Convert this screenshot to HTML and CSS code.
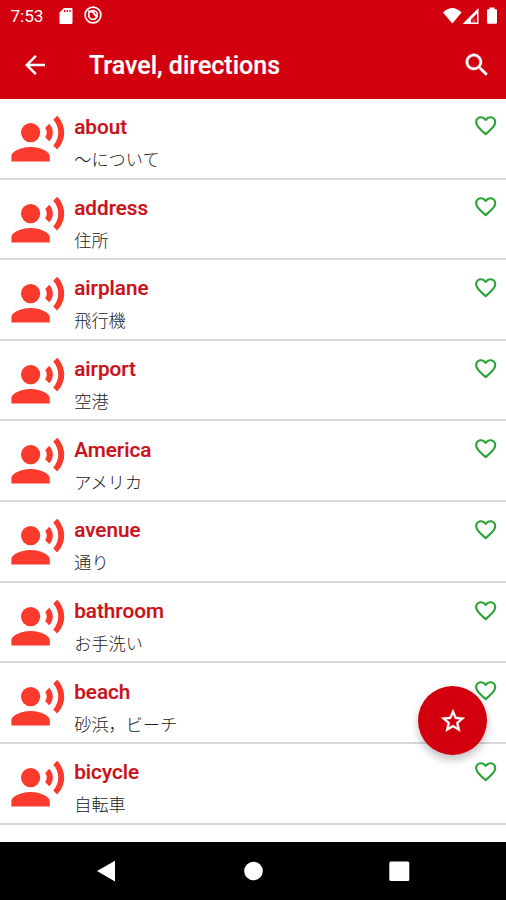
FILE: index.html
```html
<!DOCTYPE html>
<html lang="en">
<head>
<meta charset="utf-8">
<title>Travel, directions</title>
<link rel="stylesheet" href="styles.css">
</head>
<body>
<svg class="defs" aria-hidden="true">
  <symbol id="voice" viewBox="0 0 24 24"><circle cx="9" cy="9" r="4"/><path d="M9 15c-2.67 0-8 1.34-8 4v2h16v-2c0-2.66-5.33-4-8-4zm7.76-9.64l-1.68 1.69c.84 1.18.84 2.71 0 3.89l1.68 1.69c2.02-2.02 2.02-5.07 0-7.27zM20.07 2l-1.63 1.63c2.77 3.02 2.77 7.56 0 10.74L20.07 16c3.9-3.89 3.91-9.95 0-14z"/></symbol>
  <symbol id="heart" viewBox="0 0 24 24"><path d="M16.5 3c-1.74 0-3.41.81-4.5 2.09C10.91 3.81 9.24 3 7.5 3 4.42 3 2 5.42 2 8.5c0 3.78 3.4 6.86 8.55 11.54L12 21.35l1.45-1.32C18.6 15.36 22 12.28 22 8.5 22 5.42 19.58 3 16.5 3zm-4.4 15.55l-.1.1-.1-.1C7.14 14.24 4 11.39 4 8.5 4 6.5 5.5 5 7.5 5c1.54 0 3.04.99 3.57 2.36h1.87C13.46 5.99 14.96 5 16.5 5c2 0 3.5 1.5 3.5 3.5 0 2.89-3.14 5.74-7.9 10.05z"/></symbol>
</svg>
<div class="screen">
  <header class="top">
    <div class="status">
      <span class="clock">7:53</span>
      <svg class="sd" viewBox="0 0 14 16"><path fill-rule="evenodd" d="M5 0h7.300q1.200 0 1.200 1.200v13.600q0 1.200-1.200 1.200H1.700Q.5 16 .5 14.800V4.500zM5 2v2h1.300V2zm2.700 0v2h1.300V2zm2.700 0v2h1.300V2z"/></svg>
      <svg class="sync" viewBox="0 0 18 18"><g fill="none" stroke="#fff"><circle cx="9" cy="9" r="7.900" stroke-width="1.700"/><circle cx="9" cy="9" r="4.300" stroke-width="1.700"/><path d="M4 5.500h4.500L13 11.500" stroke-width="2"/></g></svg>
      <svg class="signals" viewBox="0 0 56 18"><path d="M0 5.500Q9.300-3.500 18.600 5.500L9.300 16.500z"/><path fill-rule="evenodd" d="M19.500 17L35.500 1v16zM28 15.500h6V6.500L28 12.500z"/><path d="M29.500 11.500h3v4h-3z" opacity=".25"/><path d="M46.500 .5h5v1.700h1.500q1 0 1 1v12.600q0 1-1 1h-8q-1 0-1-1V3.200q0-1 1-1h1.500z"/></svg>
    </div>
    <div class="bar">
      <svg class="back" viewBox="0 0 24 24"><path d="M20 11H7.830l5.590-5.590L12 4l-8 8 8 8 1.410-1.410L7.830 13H20z"/></svg>
      <h1>Travel, directions</h1>
      <svg class="search" viewBox="0 0 24 24"><path d="M15.500 14h-.790l-.280-.270C15.410 12.590 16 11.110 16 9.500 16 5.910 13.090 3 9.500 3S3 5.910 3 9.500 5.910 16 9.500 16c1.610 0 3.090-.590 4.230-1.570l.270.280v.790l5 4.990L20.490 19zm-6 0C7.010 14 5 11.990 5 9.500S7.010 5 9.500 5 14 7.010 14 9.500 11.990 14 9.500 14z"/></svg>
    </div>
  </header>
  <main class="list">
    <div class="row"><svg class="voice"><use href="#voice"/></svg><div class="words"><b>about</b><span lang="ja">〜について</span></div><svg class="heart"><use href="#heart"/></svg></div>
    <div class="row"><svg class="voice"><use href="#voice"/></svg><div class="words"><b>address</b><span lang="ja">住所</span></div><svg class="heart"><use href="#heart"/></svg></div>
    <div class="row"><svg class="voice"><use href="#voice"/></svg><div class="words"><b>airplane</b><span lang="ja">飛行機</span></div><svg class="heart"><use href="#heart"/></svg></div>
    <div class="row"><svg class="voice"><use href="#voice"/></svg><div class="words"><b>airport</b><span lang="ja">空港</span></div><svg class="heart"><use href="#heart"/></svg></div>
    <div class="row"><svg class="voice"><use href="#voice"/></svg><div class="words"><b>America</b><span lang="ja">アメリカ</span></div><svg class="heart"><use href="#heart"/></svg></div>
    <div class="row"><svg class="voice"><use href="#voice"/></svg><div class="words"><b>avenue</b><span lang="ja">通り</span></div><svg class="heart"><use href="#heart"/></svg></div>
    <div class="row"><svg class="voice"><use href="#voice"/></svg><div class="words"><b>bathroom</b><span lang="ja">お手洗い</span></div><svg class="heart"><use href="#heart"/></svg></div>
    <div class="row"><svg class="voice"><use href="#voice"/></svg><div class="words"><b>beach</b><span lang="ja">砂浜，ビーチ</span></div><svg class="heart"><use href="#heart"/></svg></div>
    <div class="row"><svg class="voice"><use href="#voice"/></svg><div class="words"><b>bicycle</b><span lang="ja">自転車</span></div><svg class="heart"><use href="#heart"/></svg></div>
  </main>
  <div class="fab"><svg viewBox="0 0 24 24"><path d="M22 9.240l-7.190-.620L12 2 9.190 8.630 2 9.240l5.460 4.730L5.820 21 12 17.270 18.180 21l-1.630-7.030zM12 15.400l-3.760 2.270 1-4.280-3.320-2.880 4.380-.380L12 6.100l1.710 4.040 4.380.380-3.320 2.880 1 4.280z"/></svg></div>
  <nav class="nav">
    <svg viewBox="0 0 506 58"><path d="M97 29L115 18.700V39.500z"/><circle cx="253.500" cy="29" r="9.300"/><rect x="389.300" y="19.500" width="20" height="19.500" rx="1.500"/></svg>
  </nav>
</div>
</body>
</html>
```
FILE: styles.css
```css
* { box-sizing: border-box; }
body { margin: 0; background: #fff; font-family: Roboto, "Noto Sans CJK JP", sans-serif; }
svg { display: block; flex: none; fill: currentColor; }
.defs { position: absolute; width: 0; height: 0; }
.screen { position: relative; width: 506px; height: 900px; display: flex; flex-direction: column; overflow: hidden; }

.top { height: 98.5px; flex: none; background: #d2000f; color: #fff; }
.status { height: 32px; display: flex; align-items: center; padding: 0 8px 0 10.500px; }
.clock { width: 48.500px; font-size: 17.300px; line-height: 32px; letter-spacing: -.1px; }
.sd { width: 14px; height: 16px; margin-top: -1px; }
.sync { width: 18px; height: 18px; margin-left: 11px; margin-top: -2px; }
.signals { width: 56px; height: 18px; margin-left: auto; margin-right: -1px; margin-top: -1px; }
.bar { height: 66px; display: flex; align-items: center; padding: 0 14.500px 0 20px; }
.back, .search { width: 30px; height: 30px; }
.search { margin-left: auto; margin-top: -1px; stroke: currentColor; stroke-width: .3; }
h1 { margin: 2px 0 0 39px; font-size: 25px; font-weight: 500; line-height: 32px; -webkit-text-stroke: .2px; }

.list { flex: 1; min-height: 0; overflow: hidden; }
.row { height: 80.650px; display: flex; padding: 0 8px 0 8.500px; border-bottom: 2px solid #d8d8d8; }
.row:first-child { height: 81px; }
.voice { width: 57.600px; height: 57.600px; margin-top: 12px; color: #f93a2c; }
.words { flex: 1; margin-left: 8.100px; padding-top: 15.300px; }
.words b, .words span { display: block; }
.words b { color: #c91219; font-size: 20.700px; font-weight: 500; line-height: 26px; -webkit-text-stroke: .2px; }
.words span { margin-top: 6px; color: #222; font-family: "Noto Sans CJK JP", sans-serif; font-size: 17.200px; font-weight: 300; line-height: 26px; }
.heart { width: 25.400px; height: 25.400px; margin-top: 14.800px; color: #2ca337; }

.fab { position: absolute; left: 418px; top: 686px; width: 69px; height: 69px; border-radius: 50%; display: flex; align-items: center; justify-content: center; background: #d2000f; color: #fff; box-shadow: 0 5px 9px rgba(0,0,0,.24); }
.fab svg { width: 28px; height: 28px; stroke: currentColor; stroke-width: .4; }
.nav { height: 58px; flex: none; background: #000; color: #fff; }
.nav svg { width: 506px; height: 58px; }
```
